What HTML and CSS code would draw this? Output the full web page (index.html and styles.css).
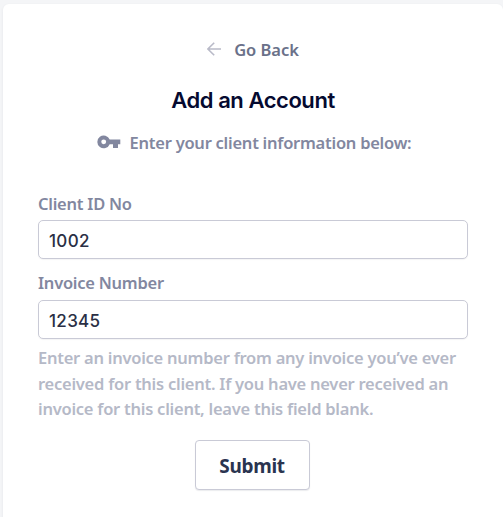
FILE: index.html
```html
<!DOCTYPE html>
<html lang="en">
<head>
    <meta charset="UTF-8">
    <meta name="viewport" content="width=device-width, initial-scale=1.0">
    <title>Add an Account</title>
    <link rel="stylesheet" href="styles.css">
</head>
<body>

    <div class="card">
        <a href="#" class="back-link">
            <svg width="14" height="14" viewBox="0 0 14 14" fill="none" stroke="#b9bac8" stroke-width="1.6">
                <path d="M14 7H1M7.2 0.7L0.9 7l6.3 6.3"/>
            </svg>
            <span>Go Back</span>
        </a>

        <h1>Add an Account</h1>

        <p class="intro">
            <svg width="24" height="14" viewBox="0 0 24 14" fill="#82879f">
                <path fill-rule="evenodd" d="M12.7 4.6A6.4 6.4 0 1 0 12.7 9.2H16V13h5V9.2h2.3V4.6zM6.7 4.4a2.4 2.4 0 1 1 0 4.9 2.4 2.4 0 0 1 0-4.9z"/>
            </svg>
            <span>Enter your client information below:</span>
        </p>

        <form id="accountForm">
            <div class="form-group">
                <label for="clientId">Client ID No</label>
                <input type="text" id="clientId" name="clientId" value="1002">
            </div>
            <div class="form-group">
                <label for="invoice">Invoice Number</label>
                <input type="text" id="invoice" name="invoice" value="12345">
            </div>
            <p class="help">Enter an invoice number from any invoice you’ve ever<br>received for this client. If you have never received an<br>invoice for this client, leave this field blank.</p>
            <button type="submit">Submit</button>
        </form>
    </div>

</body>
</html>
```

FILE: styles.css
```css
/* General Styles */
body {
    font-family: "Noto Sans", sans-serif;
    font-size: 16.5px;
    font-weight: 600;
    margin: 0;
    padding: 4px 0 0 3px;
    background: #f4f5f7;
    letter-spacing: -0.25px;
    overflow: hidden;
}

.card {
    box-sizing: border-box;
    height: 530px;
    padding: 32px 35px 0;
    background: #fff;
    border-radius: 6px;
    box-shadow: 0 1px 3px rgba(60, 66, 87, 0.08);
    text-align: center;
}

.back-link {
    display: flex;
    justify-content: center;
    align-items: center;
    gap: 13px;
    height: 26px;
    color: #6a7189;
    text-decoration: none;
    letter-spacing: -0.05px;
}

h1 {
    margin: 22px 0 0;
    font-family: Inter, sans-serif;
    font-size: 22px;
    font-weight: 600;
    line-height: 33px;
    color: #050a30;
    letter-spacing: -0.45px;
}

.intro {
    display: flex;
    justify-content: center;
    align-items: center;
    gap: 9px;
    height: 26px;
    margin: 12px 0 0;
    padding-left: 2px;
    color: #82879f;
}

/* Form */
form {
    margin-top: 36px;
}

.form-group {
    margin-bottom: 11px;
    text-align: left;
}

.form-group label {
    display: block;
    height: 29px;
    line-height: 26px;
    color: #82879f;
}

.form-group + .form-group label {
    height: 30px;
}

.form-group input {
    display: block;
    box-sizing: border-box;
    width: 430px;
    height: 39px;
    padding: 3px 10px 0;
    border: 1px solid #c9cad6;
    border-radius: 5px;
    box-shadow: 0 1px 1px rgba(60, 66, 87, 0.06);
    font-family: Inter, sans-serif;
    font-size: 17px;
    font-weight: 450;
    color: #2a2f45;
    letter-spacing: 0.3px;
}

.help {
    margin: -5px 0 0;
    line-height: 25.5px;
    text-align: left;
    white-space: nowrap;
    color: #b5b9c7;
}

button {
    width: 115px;
    height: 50px;
    margin: 18px 2px 0 0;
    padding: 2px 0 0;
    background: #fff;
    border: 1px solid #c9cad6;
    border-radius: 4px;
    box-shadow: 0 1px 1px rgba(60, 66, 87, 0.1);
    font-family: "Noto Sans", sans-serif;
    font-size: 19px;
    font-weight: 700;
    color: #2a3450;
    letter-spacing: -0.3px;
}
```
